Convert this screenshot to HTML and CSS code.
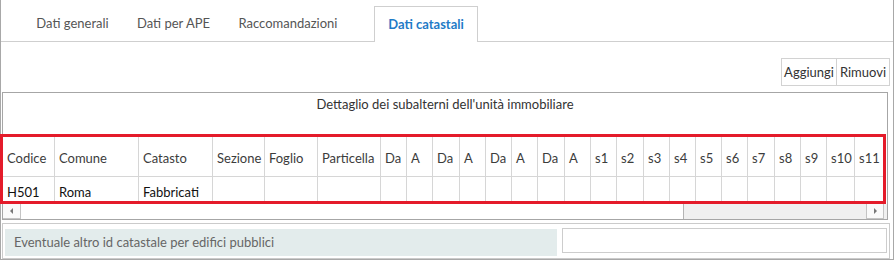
FILE: index.html
```html
<!DOCTYPE html>
<html lang="it">
<head>
  <meta charset="UTF-8">
  <title>Dati catastali</title>
  <link rel="stylesheet" href="styles.css">
</head>
<body>
  <div class="panel">
    <div class="tabs">
      <div class="tab t1">Dati generali</div>
      <div class="tab t2">Dati per APE</div>
      <div class="tab t3">Raccomandazioni</div>
      <div class="tab active">Dati catastali</div>
    </div>

    <div class="toolbar">
      <button class="tool-btn add">Aggiungi</button>
      <button class="tool-btn remove">Rimuovi</button>
    </div>

    <div class="grid-box">
      <div class="grid-title">Dettaglio dei subalterni dell'unità immobiliare</div>
      <div class="grid-scroll">
        <table class="sub-table">
          <thead>
            <tr id="headRow"></tr>
          </thead>
          <tbody>
            <tr id="dataRow"></tr>
          </tbody>
        </table>
      </div>
      <div class="hscroll">
        <div class="hs-btn hs-left"><span class="arrow-left"></span></div>
        <div class="hs-thumb"></div>
        <div class="hs-track"></div>
        <div class="hs-btn hs-right"><span class="arrow-right"></span></div>
      </div>
      <!-- evidenziazione -->
      <div class="highlight"></div>
    </div>

    <div class="field-row">
      <div class="field-label">Eventuale altro id catastale per edifici pubblici</div>
      <input class="field-input" type="text">
    </div>
  </div>

  <script>
    // colonne: [titolo, larghezza]
    const cols = [
      ['Codice', 52], ['Comune', 84], ['Catasto', 74], ['Sezione', 52],
      ['Foglio', 53], ['Particella', 63],
      ['Da', 26], ['A', 26], ['Da', 27], ['A', 26],
      ['Da', 26], ['A', 26], ['Da', 27], ['A', 26],
      ['s1', 26], ['s2', 27], ['s3', 26], ['s4', 26], ['s5', 26],
      ['s6', 26], ['s7', 27], ['s8', 26], ['s9', 26], ['s10', 28],
      ['s11', 30]
    ];
    const row = ['H501', 'Roma', 'Fabbricati'];

    const head = document.getElementById('headRow');
    const data = document.getElementById('dataRow');
    let total = 0;
    cols.forEach(function(c, i) {
      const th = document.createElement('th');
      th.innerText = c[0];
      th.style.width = c[1] + 'px';
      head.appendChild(th);
      const td = document.createElement('td');
      td.innerText = row[i] || '';
      data.appendChild(td);
      total += c[1];
    });
    document.querySelector('.sub-table').style.width = total + 'px';
  </script>
</body>
</html>
```

FILE: styles.css
```css
body {
  margin: 0;
  font-family: Lato, "Open Sans", sans-serif;
  font-size: 13px;
  color: #333;
  background: #fff;
}
.panel {
  width: 894px;
  height: 260px;
  box-sizing: border-box;
  border: 1px solid #a8a8a8;
  border-top: none;
}

/* tabs */
.tabs {
  display: flex;
  align-items: flex-end;
  height: 41px;
  padding-left: 21px;
  border-bottom: 1px solid #cfcfcf;
}
.tab {
  height: 35px;
  line-height: 35px;
  text-align: center;
  color: #555;
  box-sizing: border-box;
}
.tab.t1 { width: 101px; }
.tab.t2 { width: 101px; }
.tab.t3 { width: 128px; }
.tab.active {
  width: 104px;
  height: 36px;
  margin-left: 22px;
  margin-bottom: -1px;
  line-height: 34px;
  background: #fff;
  border: 1px solid #cfcfcf;
  border-bottom: none;
  color: #1f7bc7;
  font-weight: 700;
}

/* toolbar */
.toolbar {
  display: flex;
  justify-content: flex-end;
  margin: 16px 3px 6px 0;
}
.tool-btn {
  height: 28px;
  padding: 0;
  margin: 0;
  font-family: inherit;
  font-size: 13px;
  color: #333;
  background: #fff;
  border: 1px solid #d2d2d2;
  cursor: pointer;
}
.tool-btn.add { width: 56px; }
.tool-btn.remove { width: 53px; }
.tool-btn + .tool-btn {
  border-left: none;
}

/* grid */
.grid-box {
  position: relative;
  margin: 0 5px 0 1px;
  height: 128px;
  box-sizing: border-box;
  border: 1px solid #a6a6a6;
}
.grid-title {
  height: 41px;
  padding-top: 3px;
  box-sizing: border-box;
  text-align: center;
  line-height: 16px;
  color: #333;
}
.grid-scroll {
  height: 70px;
  overflow: hidden;
}
.sub-table {
  table-layout: fixed;
  border-collapse: separate;
  border-spacing: 0;
}
.sub-table th,
.sub-table td {
  box-sizing: border-box;
  padding: 0 0 0 4px;
  border-right: 1px solid #d6d6d6;
  border-bottom: 1px solid #d6d6d6;
  text-align: left;
  white-space: nowrap;
  overflow: hidden;
  line-height: 16px;
}
.sub-table th {
  height: 43px;
  vertical-align: bottom;
  padding-bottom: 10px;
  font-weight: normal;
  color: #3c3c3c;
}
.sub-table td {
  height: 32px;
  vertical-align: top;
  padding-top: 7px;
  color: #111;
}

/* finta barra di scorrimento */
.hscroll {
  display: flex;
  height: 15px;
  background: #f0f0f0;
}
.hs-btn {
  width: 18px;
  box-sizing: border-box;
  background: #fafafa;
  border: 1px solid #c4c4c4;
  display: flex;
  align-items: center;
  justify-content: center;
}
.hs-left {
  border-top: none;
  border-left: none;
}
.hs-right {
  margin-right: 3px;
  border-top: none;
}
.hs-thumb {
  width: 663px;
  background: #fff;
  border-right: 1px solid #b4b4b4;
  box-sizing: border-box;
}
.hs-track {
  flex: 1;
}
.arrow-left {
  width: 0;
  height: 0;
  border-top: 3px solid transparent;
  border-bottom: 3px solid transparent;
  border-right: 3px solid #777;
}
.arrow-right {
  width: 0;
  height: 0;
  border-top: 3px solid transparent;
  border-bottom: 3px solid transparent;
  border-left: 3px solid #777;
}
.highlight {
  position: absolute;
  left: -3px;
  top: 41px;
  width: 886px;
  height: 70px;
  box-sizing: border-box;
  border: 3px solid #e41b2a;
  pointer-events: none;
}

/* riga campo */
.field-row {
  display: flex;
  align-items: flex-start;
  gap: 5px;
  margin: 3px 3px 0 1px;
  height: 36px;
  box-sizing: border-box;
  padding: 4px 2px 0 2px;
  border: 1px solid #cbcbcb;
}
.field-label {
  width: 552px;
  height: 27px;
  margin-top: 1px;
  padding-left: 9px;
  box-sizing: border-box;
  background: #e3ecec;
  color: #666;
  line-height: 27px;
}
.field-input {
  flex: 1;
  height: 25px;
  margin: 0;
  box-sizing: border-box;
  border: 1px solid #cdcdcd;
  outline: none;
}
```
